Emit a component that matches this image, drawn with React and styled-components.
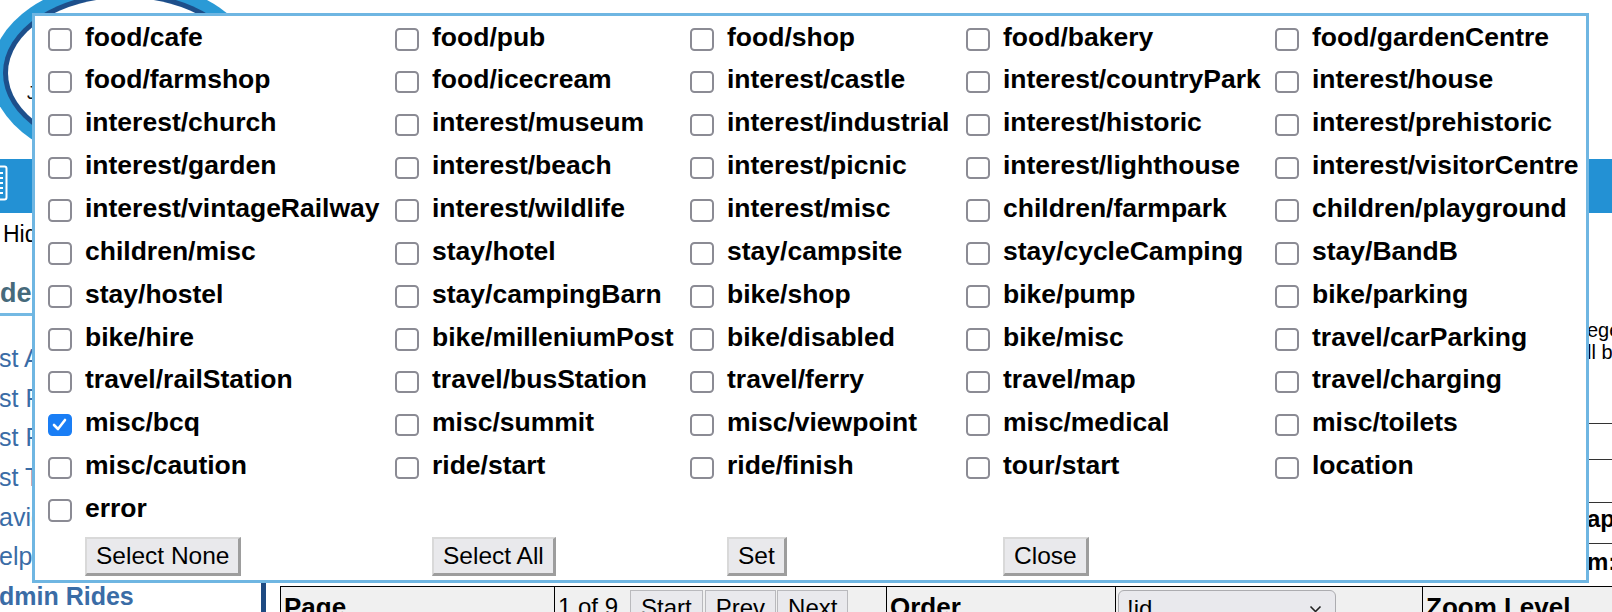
import React, { useState } from "react";
import styled, { createGlobalStyle, css } from "styled-components";

const GlobalStyle = createGlobalStyle`
  html, body { margin: 0; padding: 0; background: #fff; }
  body {
    font-family: "Liberation Sans", Arial, Helvetica, sans-serif;
    color: #000;
    overflow: hidden;
  }
  * { box-sizing: border-box; }
`;

const CATEGORIES = [
  "food/cafe", "food/pub", "food/shop", "food/bakery", "food/gardenCentre",
  "food/farmshop", "food/icecream", "interest/castle", "interest/countryPark", "interest/house",
  "interest/church", "interest/museum", "interest/industrial", "interest/historic", "interest/prehistoric",
  "interest/garden", "interest/beach", "interest/picnic", "interest/lighthouse", "interest/visitorCentre",
  "interest/vintageRailway", "interest/wildlife", "interest/misc", "children/farmpark", "children/playground",
  "children/misc", "stay/hotel", "stay/campsite", "stay/cycleCamping", "stay/BandB",
  "stay/hostel", "stay/campingBarn", "bike/shop", "bike/pump", "bike/parking",
  "bike/hire", "bike/milleniumPost", "bike/disabled", "bike/misc", "travel/carParking",
  "travel/railStation", "travel/busStation", "travel/ferry", "travel/map", "travel/charging",
  "misc/bcq", "misc/summit", "misc/viewpoint", "misc/medical", "misc/toilets",
  "misc/caution", "ride/start", "ride/finish", "tour/start", "location",
  "error",
];

const NAV_LINKS = [
  { label: "st All Rides" },
  { label: "st Future Rides" },
  { label: "st Past Rides" },
  { label: "st Tours" },
  { label: "avigation" },
  { label: "elp" },
  { label: "dmin Rides", bold: true },
];

/* ---------- background page ---------- */

const Page = styled.div`
  position: relative;
  width: 1612px;
  height: 612px;
  overflow: hidden;
  background: #fff;
`;

const Header = styled.header`
  height: 159px;
`;

const Logo = styled.svg`
  display: block;
`;

const NavBar = styled.nav`
  height: 54px;
  background: #2391d4;
  display: flex;
  align-items: flex-start;
`;

const MenuIcon = styled.svg`
  display: block;
  margin: 6px 0 0 -20px;
`;

const SubBar = styled.div`
  height: 50px;
  padding: 8px 0 0 3px;
  font-size: 23px;
  line-height: 26px;
  white-space: nowrap;
`;

const Body = styled.div`
  display: grid;
  grid-template-columns: 261px 5px 1fr;
  min-height: 400px;
`;

const Sidebar = styled.aside`
  padding-top: 15px;
  white-space: nowrap;
`;

const SideHeading = styled.h2`
  margin: 0;
  font-size: 27px;
  line-height: 31px;
  font-weight: bold;
  color: #466a7b;
  padding-bottom: 4px;
  border-bottom: 3px solid #74b9e3;
`;

const NavList = styled.ul`
  list-style: none;
  margin: 22.8px 0 0;
  padding: 0;
`;

const NavItem = styled.li`
  font-size: 25px;
  line-height: 39.7px;
  color: #3a6ca6;
  margin-left: -1px;
  font-weight: ${(p) => (p.$bold ? "bold" : "normal")};
`;

const SideRule = styled.div`
  background: #1e4a82;
`;

const Main = styled.main`
  padding-left: 14px;
  white-space: nowrap;
`;

const Intro = styled.div`
  display: grid;
  grid-template-columns: 1307px auto;
  margin-top: 57.2px;
  font-size: 20px;
  line-height: 21.6px;
`;

const FormTable = styled.div`
  margin-top: 59.3px;
`;

const FormRow = styled.div`
  display: grid;
  grid-template-columns: 1307px auto;
  border-top: 1px solid #333;
  height: ${(p) => p.$h}px;
  padding-top: ${(p) => p.$pad}px;
  font-size: 24px;
  line-height: 30px;
  font-weight: bold;
`;

const Pager = styled.div`
  display: grid;
  grid-template-columns: 274px 332px 229px 307px 1fr;
  background: #f0f0f0;
  border-top: 1px solid #000;
  border-left: 1px solid #000;
  height: 60px;
`;

const PagerCell = styled.div`
  display: flex;
  align-items: flex-start;
  padding: 5px 3px 0;
  border-right: 1px solid #000;
  font-size: 24px;
  line-height: 30px;
  font-weight: ${(p) => (p.$label ? "bold" : "normal")};
  ${(p) => p.$label && css`font-size: 26px;`}
`;

const PagerButton = styled.button`
  margin: -2px 0 0 ${(p) => p.$gap}px;
  height: 37px;
  padding: 0 10px;
  font: 24px "Liberation Sans", Arial, sans-serif;
  color: #000;
  background: #e9e9ed;
  border: 1px solid #b9b9bd;
  border-radius: 0;
`;

const FakeSelect = styled.div`
  margin: -2px 0 0 -1px;
  width: 218px;
  height: 38px;
  padding: 0 13px 0 8px;
  display: flex;
  align-items: center;
  justify-content: space-between;
  background: #e9e9ed;
  border: 1px solid #acacb0;
  border-radius: 6px;
  font-size: 24px;
`;

/* ---------- dialog ---------- */

const Dialog = styled.div`
  position: absolute;
  left: 32px;
  top: 13px;
  width: 1557px;
  background: #fff;
  border: 3px solid #6fb6e2;
  padding-left: 13px;
`;

const OptionGrid = styled.div`
  display: grid;
  grid-template-columns: 347px 295px 276px 309px 1fr;
  grid-template-rows: repeat(12, 42.85px) auto;
`;

const Option = styled.label`
  display: flex;
  align-items: flex-start;
  padding-top: 5.6px;
  cursor: pointer;
  white-space: nowrap;
  font-size: 26.5px;
  font-weight: bold;
  line-height: 30px;
  user-select: none;
`;

const Box = styled.span`
  flex: none;
  width: 23.5px;
  height: 22.5px;
  margin: 6.5px 13.5px 0 0;
  border: 2.2px solid #8b8b94;
  border-radius: 4.5px;
  background: #fff;
  display: flex;
  align-items: center;
  justify-content: center;
  ${(p) =>
    p.$checked &&
    css`
      background: #1a7ef5;
      border-color: #1a7ef5;
    `}
`;

const ButtonCell = styled.div`
  padding: 6.4px 0 4.5px 37px;
  ${(p) => p.$first && css`grid-column: 1;`}
`;

const DialogButton = styled.button`
  height: 39px;
  padding: 0 9px;
  font: 24.5px "Liberation Sans", Arial, sans-serif;
  color: #000;
  background: #e9e9ec;
  border-style: solid;
  border-width: 2px 3px 3px 2px;
  border-color: #d9d9d9 #9d9d9d #9d9d9d #d9d9d9;
  border-radius: 0;
  cursor: pointer;
`;

export default function App() {
  const [checked, setChecked] = useState(() => new Set(["misc/bcq"]));
  const [open, setOpen] = useState(true);

  const toggle = (name) =>
    setChecked((prev) => {
      const next = new Set(prev);
      if (next.has(name)) next.delete(name);
      else next.add(name);
      return next;
    });

  return (
    <>
      <GlobalStyle />
      <Page>
        <Header>
          <Logo width="300" height="159" viewBox="0 0 300 159">
            <ellipse cx="125" cy="73" rx="134" ry="92.3" fill="#2a9ad6" />
            <ellipse cx="125" cy="73" rx="122" ry="80.3" fill="#1d4f8b" />
            <ellipse cx="125" cy="73" rx="117" ry="75.3" fill="#fff" />
            <text x="27" y="99" fontSize="18" fontFamily="Liberation Sans, Arial, sans-serif" fill="#111">
              J
            </text>
          </Logo>
        </Header>
        <NavBar>
          <MenuIcon width="28" height="36" viewBox="0 0 28 36">
            <rect x="1.5" y="1.5" width="25" height="33" rx="2" fill="none" stroke="#fff" strokeWidth="2" />
            <path d="M5 8h18M5 13h18M5 18h18M5 23h18M5 28h18" stroke="#fff" strokeWidth="2" />
          </MenuIcon>
        </NavBar>
        <SubBar>Hide map</SubBar>
        <Body>
          <Sidebar>
            <SideHeading>de</SideHeading>
            <NavList>
              {NAV_LINKS.map((l) => (
                <NavItem key={l.label} $bold={l.bold}>
                  {l.label}
                </NavItem>
              ))}
            </NavList>
          </Sidebar>
          <SideRule />
          <Main>
            <Intro>
              <div />
              <div>
                egend
                <br />
                ll be
              </div>
            </Intro>
            <FormTable>
              <FormRow $h={36.6} $pad={2} />
              <FormRow $h={42.4} $pad={2} />
              <FormRow $h={41.6} $pad={1}>
                <div />
                <div>ap</div>
              </FormRow>
              <FormRow $h={42.7} $pad={3}>
                <div />
                <div>m:</div>
              </FormRow>
            </FormTable>
            <Pager>
              <PagerCell $label>Page</PagerCell>
              <PagerCell>
                <span>1 of 9</span>
                <PagerButton $gap={12}>Start</PagerButton>
                <PagerButton $gap={2}>Prev</PagerButton>
                <PagerButton $gap={1}>Next</PagerButton>
              </PagerCell>
              <PagerCell $label>Order</PagerCell>
              <PagerCell>
                <FakeSelect>
                  <span>!id</span>
                  <svg width="13" height="8" viewBox="0 0 13 8">
                    <path d="M1.5 1.5l5 5 5-5" fill="none" stroke="#222" strokeWidth="1.6" />
                  </svg>
                </FakeSelect>
              </PagerCell>
              <PagerCell $label>Zoom Level</PagerCell>
            </Pager>
          </Main>
        </Body>

        {open && (
          <Dialog>
            <OptionGrid>
              {CATEGORIES.map((name) => {
                const on = checked.has(name);
                return (
                  <Option key={name} role="checkbox" aria-checked={on} onClick={() => toggle(name)}>
                    <Box $checked={on}>
                      {on && (
                        <svg width="15" height="13" viewBox="0 0 15 13">
                          <path
                            d="M2 7l4 4 7-9"
                            fill="none"
                            stroke="#fff"
                            strokeWidth="2.6"
                            strokeLinecap="round"
                            strokeLinejoin="round"
                          />
                        </svg>
                      )}
                    </Box>
                    <span>{name}</span>
                  </Option>
                );
              })}
              <ButtonCell $first>
                <DialogButton onClick={() => setChecked(new Set())}>Select None</DialogButton>
              </ButtonCell>
              <ButtonCell>
                <DialogButton onClick={() => setChecked(new Set(CATEGORIES))}>Select All</DialogButton>
              </ButtonCell>
              <ButtonCell>
                <DialogButton>Set</DialogButton>
              </ButtonCell>
              <ButtonCell>
                <DialogButton onClick={() => setOpen(false)}>Close</DialogButton>
              </ButtonCell>
            </OptionGrid>
          </Dialog>
        )}
      </Page>
    </>
  );
}
